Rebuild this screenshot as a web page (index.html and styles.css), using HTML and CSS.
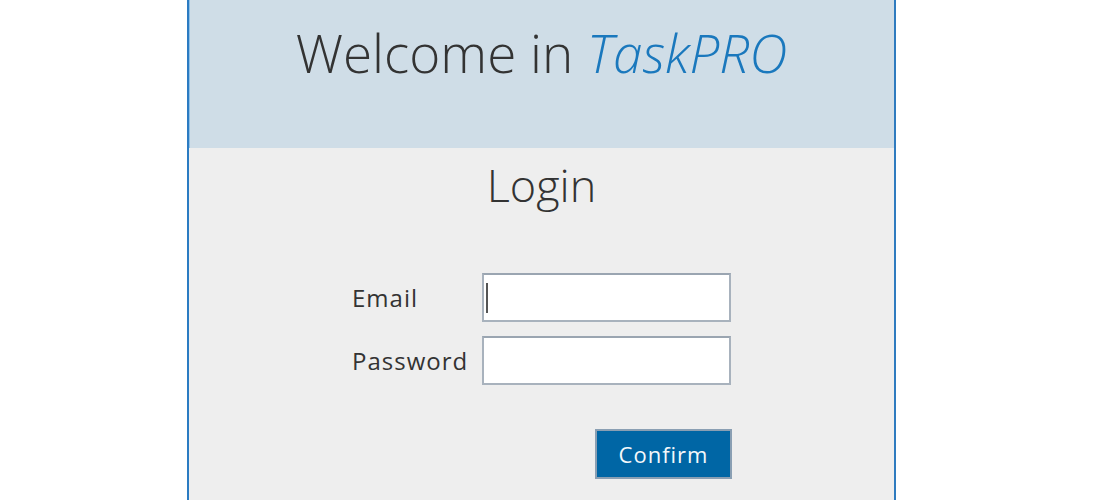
FILE: index.html
```html
<!DOCTYPE html>
<html>
<head>
<meta charset="utf-8">
<link rel="stylesheet" href="styles.css">
</head>
<body>
<div class="card">
  <header class="card-header">
    <h1 class="title">Welcome in <em class="brand">TaskPRO</em></h1>
  </header>
  <main class="card-body">
    <h2 class="subtitle">Login</h2>
    <form class="form">
      <label class="label" for="email">Email</label>
      <div class="input focused" id="email"><span class="caret"></span></div>
      <label class="label" for="password">Password</label>
      <div class="input" id="password"></div>
      <div class="actions">
        <button type="button" class="btn">Confirm</button>
      </div>
    </form>
  </main>
</div>
</body>
</html>
```

FILE: styles.css
```css
html, body {
  margin: 0;
  padding: 0;
  background: #ffffff;
  height: 100%;
  overflow: hidden;
}

body {
  font-family: "Open Sans", "DejaVu Sans", sans-serif;
}

.card {
  margin-left: 187px;
  width: 705px;
  height: 500px;
  border-left: 2px solid #2b7bc2;
  border-right: 2px solid #2f7bbf;
  background: #eeeeee;
  display: flex;
  flex-direction: column;
}

.card-header {
  background: #cfdde7;
  height: 148px;
  display: flex;
  justify-content: center;
  box-shadow: inset 1px 0 0 #8fc0e6;
}

.title {
  margin: 19px 0 0 0;
  font-size: 53px;
  font-weight: 300;
  color: #333333;
  line-height: 68px;
}

.brand {
  font-style: italic;
  color: #1a78bd;
}

.card-body {
  display: flex;
  flex-direction: column;
  align-items: center;
  flex: 1;
}

.subtitle {
  margin: 8px 0 0 0;
  font-size: 45px;
  font-weight: 300;
  color: #333333;
  line-height: 57px;
}

.form {
  margin-top: 60px;
  display: grid;
  grid-template-columns: 130px 249px;
  row-gap: 14px;
  align-items: center;
}

.label {
  font-size: 24px;
  color: #333333;
  letter-spacing: 1px;
  line-height: 30px;
}

.input {
  box-sizing: border-box;
  height: 49px;
  background: #ffffff;
  border: 2px solid #a8b2bd;
  border-top-color: #9aa5b1;
  position: relative;
}

.caret {
  position: absolute;
  left: 2px;
  top: 8px;
  width: 2px;
  height: 30px;
  background: #555555;
}

.actions {
  grid-column: 1 / 3;
  display: flex;
  justify-content: flex-end;
  margin-top: 30px;
}

.btn {
  box-sizing: border-box;
  width: 137px;
  height: 50px;
  background: #0066a5;
  border: 2px solid #8a9fb3;
  color: #f4f8fb;
  font-family: "Open Sans", "DejaVu Sans", sans-serif;
  font-size: 22px;
  letter-spacing: 1px;
  padding: 0;
  margin-right: -1px;
}
```
